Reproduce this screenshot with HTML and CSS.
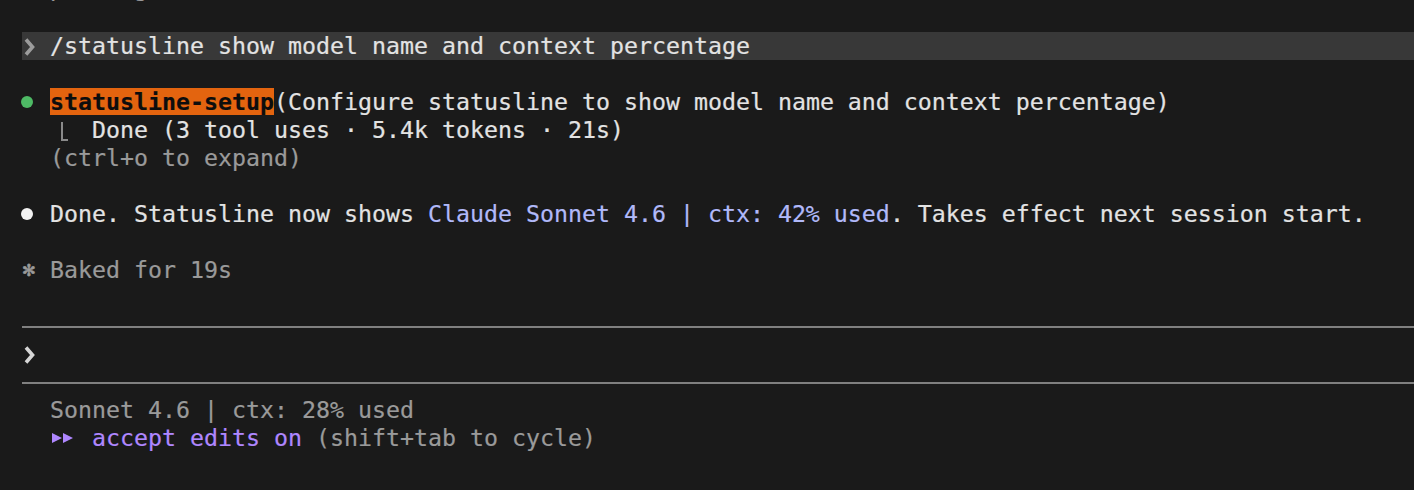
FILE: index.html
```html
<!DOCTYPE html>
<html lang="en">
<head>
<meta charset="utf-8">
<title>Terminal</title>
<link rel="stylesheet" href="styles.css">
</head>
<body>
<main class="term">
  <div class="line dim top">  parsing,</div>
  <div class="line"></div>
  <div class="line echo"><span class="cell"><svg class="chev" viewBox="0 0 14 28" width="14" height="28"><polyline points="4,7.5 10.5,15 4,22.5"/></svg></span> /statusline show model name and context percentage</div>
  <div class="line"></div>
  <div class="line"><span class="cell"><span class="dot green"></span></span> <span class="agent">statusline-setup</span>(Configure statusline to show model name and context percentage)</div>
  <div class="line">  <span class="cell elbow"></span>  Done (3 tool uses · 5.4k tokens · 21s)</div>
  <div class="line dim">  (ctrl+o to expand)</div>
  <div class="line"></div>
  <div class="line"><span class="cell"><span class="dot white"></span></span> Done. Statusline now shows <span class="lav">Claude Sonnet 4.6 | ctx: 42% used</span>. Takes effect next session start.</div>
  <div class="line"></div>
  <div class="line dim"><span class="cell star">✻</span> Baked for 19s</div>
  <div class="line"></div>
  <div class="rule"></div>
  <div class="line"><span class="cell"><svg class="chev light" viewBox="0 0 14 28" width="14" height="28"><polyline points="4,7.5 10.5,15 4,22.5"/></svg></span></div>
  <div class="rule"></div>
  <div class="line dim">  Sonnet 4.6 | ctx: 28% used</div>
  <div class="line">  <span class="cell"><span class="tri"></span></span><span class="cell"><span class="tri back"></span></span> <span class="purple">accept edits on</span> <span class="dim">(shift+tab to cycle)</span></div>
  <div class="line"></div>
</main>
</body>
</html>
```

FILE: styles.css
```css
html, body {
  margin: 0;
  padding: 0;
  background: #1a1a1a;
  height: 490px;
  overflow: hidden;
}

.term {
  margin-top: -24px;
  padding-left: 22px;
  font-family: "DejaVu Sans Mono", "Liberation Mono", monospace;
  font-size: 23.25px;
  line-height: 28px;
  color: #e3e3e3;
  -webkit-text-stroke: 0.2px currentColor;
}

.line {
  height: 28px;
  white-space: pre;
}

.top {
  line-height: 24px;
}

.dim {
  color: #9a9a9a;
}

.echo {
  background: #383838;
}

.cell {
  display: inline-block;
  width: 14px;
  height: 28px;
  vertical-align: top;
  position: relative;
  text-align: center;
}

.chev {
  display: block;
  fill: none;
  stroke: #9c9c9c;
  stroke-width: 3.6;
  stroke-linejoin: miter;
}

.chev.light {
  stroke: #d6d6d6;
}

.dot {
  display: block;
  width: 12px;
  height: 12px;
  border-radius: 50%;
  margin: 8px 0 0 -1px;
}

.dot.green {
  background: #4eba65;
}

.dot.white {
  background: #f2f2f2;
}

.agent {
  background: #e3640f;
  color: #0d0d0d;
  font-weight: bold;
}

.elbow::before {
  content: "";
  position: absolute;
  left: 11px;
  top: 6px;
  width: 5px;
  height: 17px;
  border-left: 2px solid #8a8a8a;
  border-bottom: 2px solid #8a8a8a;
}

.lav {
  color: #b1b9f9;
}

.purple {
  color: #af87ff;
}

.star {
  color: #9a9a9a;
  font-family: "DejaVu Sans", sans-serif;
  font-size: 16.5px;
  line-height: 30px;
  overflow: hidden;
  -webkit-text-stroke: 0.6px currentColor;
}

.rule {
  height: 28px;
  padding-top: 14px;
  box-sizing: border-box;
}

.rule::before {
  content: "";
  display: block;
  height: 2px;
  background: #808080;
}

.tri {
  position: absolute;
  top: 9px;
  left: 2px;
  width: 0;
  height: 0;
  border-top: 5.5px solid transparent;
  border-bottom: 5.5px solid transparent;
  border-left: 10px solid #af87ff;
}

.tri.back {
  left: -1px;
}
```
